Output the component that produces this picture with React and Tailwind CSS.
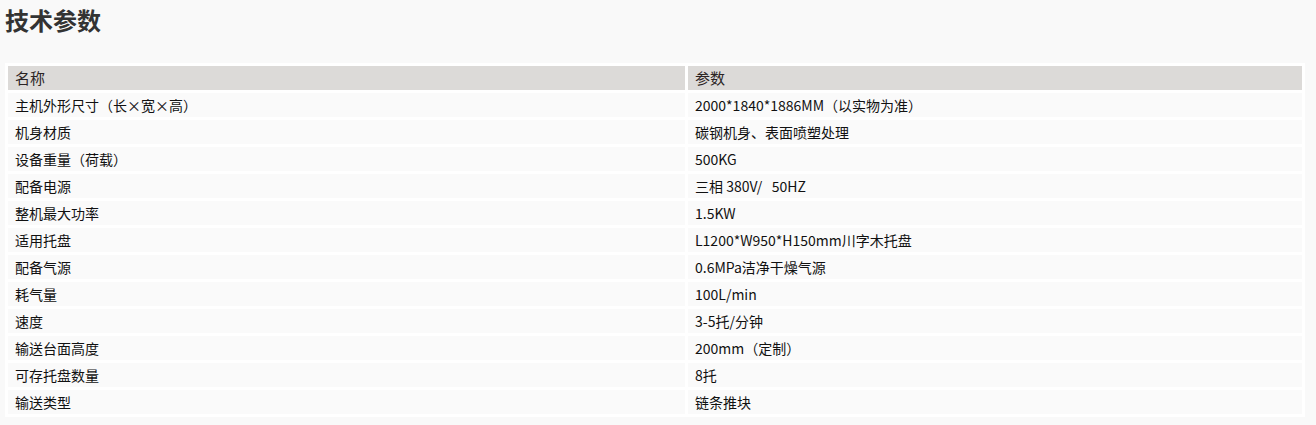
import React from 'react';

const rows = [
    ['主机外形尺寸（长×宽×高）', '2000*1840*1886MM（以实物为准）'],
    ['机身材质', '碳钢机身、表面喷塑处理'],
    ['设备重量（荷载）', '500KG'],
    ['配备电源', '三相 380V/   50HZ'],
    ['整机最大功率', '1.5KW'],
    ['适用托盘', 'L1200*W950*H150mm川字木托盘'],
    ['配备气源', '0.6MPa洁净干燥气源'],
    ['耗气量', '100L/min'],
    ['速度', '3-5托/分钟'],
    ['输送台面高度', '200mm（定制）'],
    ['可存托盘数量', '8托'],
    ['输送类型', '链条推块'],
];

const App = () => {
    return (
        <div className="min-h-[425px] w-full bg-[#f9f9f9] font-['Noto_Sans_CJK_SC',sans-serif] text-[#333]">
            {/* Title */}
            <h1 className="pl-[5px] text-[24px] font-bold leading-[40px] text-[#333]">技术参数</h1>

            {/* Parameter table */}
            <table className="mt-[23px] ml-[5px] w-[1300px] table-fixed border-separate border-spacing-[3px] bg-white text-[14px]">
                <colgroup>
                    <col className="w-[677px]" />
                    <col className="w-[614px]" />
                </colgroup>
                <thead>
                    <tr>
                        <th className="h-[24px] bg-[#dcdad8] pl-[7px] text-left text-[15px] font-normal leading-[24px] text-[#2b2424]">名称</th>
                        <th className="h-[24px] bg-[#dcdad8] pl-[7px] text-left text-[15px] font-normal leading-[24px] text-[#2b2424]">参数</th>
                    </tr>
                </thead>
                <tbody className="text-[#111]">
                    {rows.map(([name, value], idx) => (
                        <tr key={idx}>
                            <td className="h-[24px] bg-[#fafafa] p-0 pl-[7px] leading-[24px] whitespace-pre">{name}</td>
                            <td className="h-[24px] bg-[#fafafa] p-0 pl-[7px] leading-[24px] whitespace-pre">{value}</td>
                        </tr>
                    ))}
                </tbody>
            </table>
        </div>
    );
};

export default App;
